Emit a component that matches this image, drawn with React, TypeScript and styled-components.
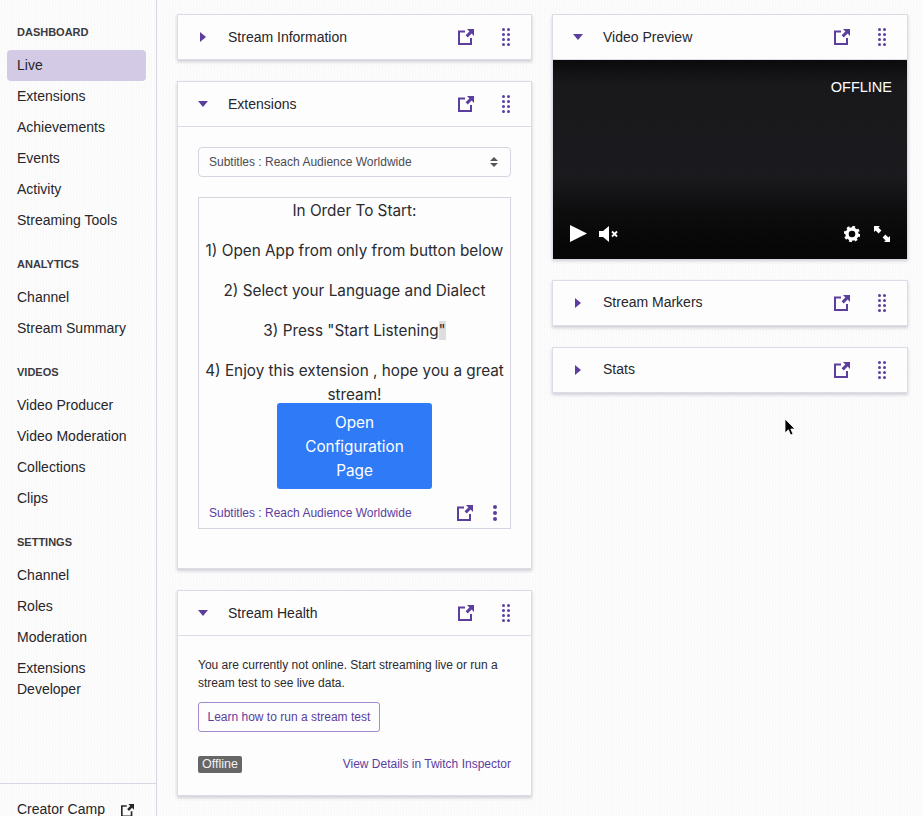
import React from "react";
import styled, { createGlobalStyle } from "styled-components";

const purple = "#5c3e9e";

const GlobalStyle = createGlobalStyle`
  html, body {
    margin: 0;
    padding: 0;
    height: 816px;
    overflow: hidden;
    background-color: #fbfbfb;
    background-image: conic-gradient(#f9f9f9 25%, #fdfdfd 0 50%, #f9f9f9 0 75%, #fdfdfd 0);
    background-size: 3px 3px;
    font-family: "Liberation Sans", Arial, sans-serif;
    color: #26262b;
  }
`;

const Page = styled.div`
  display: flex;
  width: 922px;
  height: 816px;
  overflow: hidden;
`;

const Sidebar = styled.nav`
  width: 156px;
  height: 816px;
  flex: none;
  border-right: 1px solid #d9d7e3;
  display: flex;
  flex-direction: column;
  overflow: hidden;
`;

const SideScroll = styled.div`
  flex: 1;
  padding: 21px 10px 0 7px;
`;

const SectionTitle = styled.div<{ $first?: boolean }>`
  font-size: 11px;
  font-weight: 700;
  line-height: 22px;
  height: 22px;
  padding-left: 10px;
  color: #3a3a40;
  margin-top: ${(p) => (p.$first ? 0 : "17px")};
  margin-bottom: 7px;
`;

const NavItem = styled.div<{ $active?: boolean }>`
  font-size: 14px;
  line-height: 21px;
  padding: 5px 10px;
  border-radius: 4px;
  background: ${(p) => (p.$active ? "#d3cbe6" : "transparent")};
`;

const SideFooter = styled.div`
  box-sizing: border-box;
  height: 33px;
  flex: none;
  border-top: 1px solid #d9d7e3;
  display: flex;
  align-items: flex-start;
  padding: 17px 0 0 17px;
  gap: 16px;
  font-size: 14px;
  line-height: 16px;
  svg {
    margin-top: 3px;
    flex: none;
  }
`;

const Main = styled.main`
  flex: 1;
  display: flex;
  align-items: flex-start;
  padding: 14px 0 0 20px;
  gap: 20px;
`;

const Column = styled.div`
  width: 355px;
  display: flex;
  flex-direction: column;
  gap: 21px;
`;

const RightColumn = styled(Column)`
  width: 356px;
`;

const Card = styled.section`
  background: #fdfdfd;
  border: 1px solid #dcdbe6;
  box-shadow: 0 2px 3px rgba(70, 65, 100, 0.24);
`;

const CardHeader = styled.header<{ $open?: boolean }>`
  height: 44px;
  display: flex;
  align-items: center;
  padding: 0 21px 0 20px;
  font-size: 14px;
  border-bottom: ${(p) => (p.$open ? "1px solid #dcdbe6" : "none")};
`;

const CaretSlot = styled.span`
  width: 10px;
  display: flex;
  justify-content: center;
  flex: none;
`;

const CardTitle = styled.span<{ $raised?: boolean }>`
  flex: 1;
  margin-left: 20px;
  margin-top: ${(p) => (p.$raised ? "-3px" : "-1px")};
`;

const HeaderIcons = styled.span`
  display: flex;
  align-items: center;
  gap: 28px;
`;

const ExtensionsBody = styled.div`
  padding: 20px 20px 39px;
`;

const SelectBox = styled.div`
  height: 28px;
  border: 1px solid #d5d4df;
  border-radius: 4px;
  display: flex;
  align-items: center;
  justify-content: space-between;
  padding: 0 12px 0 10px;
  font-size: 12px;
  color: #4b4b52;
`;

const ExtensionFrame = styled.div`
  margin-top: 20px;
  border: 1px solid #d5d4df;
`;

const ExtensionContent = styled.div`
  box-sizing: border-box;
  height: 291px;
  padding-top: 1px;
  font-family: Inter, Roboto, "Liberation Sans", sans-serif;
  font-size: 15.3px;
  line-height: 24px;
  text-align: center;
  color: #2b2b2f;
  overflow: hidden;
`;

const Instruction = styled.p`
  margin: 0 0 16px;
  &:last-of-type {
    margin-bottom: 0;
  }
`;

const Selection = styled.span`
  background: #dedede;
`;

const ConfigButton = styled.div`
  box-sizing: border-box;
  width: 155px;
  height: 86px;
  margin: -4px auto 0;
  padding: 8px 20px;
  border-radius: 3px;
  background: #2f7af6;
  color: #fff;
`;

const FrameFooter = styled.div`
  box-sizing: border-box;
  height: 39px;
  display: flex;
  align-items: center;
  padding: 9px 13px 0 10px;
  font-size: 12px;
  color: ${purple};
`;

const FooterLabel = styled.span`
  flex: 1;
`;

const FooterIcons = styled.span`
  display: flex;
  align-items: center;
  gap: 20px;
`;

const HealthBody = styled.div`
  padding: 20px 20px 22px;
  font-size: 12px;
  line-height: 18px;
  color: #2b2b30;
`;

const HealthText = styled.p`
  margin: 0;
`;

const OutlineButton = styled.div`
  display: inline-block;
  margin-top: 10px;
  height: 28px;
  line-height: 28px;
  padding: 0 8.5px;
  border: 1px solid #a08ad0;
  border-radius: 3px;
  color: ${purple};
`;

const HealthFooter = styled.div`
  margin-top: 23px;
  display: flex;
  align-items: center;
  justify-content: space-between;
`;

const OfflineBadge = styled.span`
  background: #666;
  color: #f2f2f2;
  border-radius: 2px;
  padding: 0 4px;
  font-size: 12.5px;
  line-height: 17px;
  height: 17px;
`;

const PurpleLink = styled.span`
  color: ${purple};
`;

const Video = styled.div`
  position: relative;
  height: 199px;
  margin-bottom: -1px;
  background-color: #000;
  background-image: conic-gradient(rgba(255, 255, 255, 0.012) 25%, transparent 0 50%, rgba(255, 255, 255, 0.012) 0 75%, transparent 0),
    linear-gradient(#09090a 0, #17171a 24px, #19181c 115px, #0c0c0d 150px, #050505 185px);
  background-size: 3px 3px, 100% 100%;
  display: flex;
  flex-direction: column;
  justify-content: space-between;
  color: #fff;
`;

const OfflineLabel = styled.div`
  align-self: flex-end;
  font-size: 14.5px;
  line-height: 16px;
  padding: 19px 15px 0 0;
`;

const Controls = styled.div`
  display: flex;
  align-items: center;
  justify-content: space-between;
  padding: 0 17px 17px 17px;
`;

const ControlGroup = styled.div<{ $gap: number }>`
  display: flex;
  align-items: center;
  gap: ${(p) => p.$gap}px;
`;

const Cursor = styled.svg`
  position: absolute;
  left: 784px;
  top: 418px;
`;

const ExternalIcon = ({ size = 16, color = purple }: { size?: number; color?: string }) => (
  <svg width={size} height={size} viewBox="0 0 16 16" fill="none">
    <path d="M7 2.5H1v12.5h12V9" stroke={color} strokeWidth="2" />
    <path d="M9 0h7v7l-2.4-2.4L9.8 8.5 7.6 6.3l3.8-3.9z" fill={color} />
  </svg>
);

const DragIcon = () => (
  <svg width="8" height="18" viewBox="0 0 8 18" fill={purple}>
    {[1.5, 6.5, 11.5, 16.5].flatMap((y) =>
      [1.5, 6.5].map((x) => <circle key={`${x}-${y}`} cx={x} cy={y} r="1.5" />)
    )}
  </svg>
);

const CaretRight = () => (
  <svg width="6" height="10" viewBox="0 0 6 10" fill={purple}>
    <path d="M0 0l6 5-6 5z" />
  </svg>
);

const CaretDown = () => (
  <svg width="10" height="6" viewBox="0 0 10 6" fill={purple}>
    <path d="M0 0h10L5 6z" />
  </svg>
);

const Panel = ({
  title,
  open,
  raised,
  children,
}: {
  title: string;
  open?: boolean;
  raised?: boolean;
  children?: React.ReactNode;
}) => (
  <Card>
    <CardHeader $open={open}>
      <CaretSlot>{open ? <CaretDown /> : <CaretRight />}</CaretSlot>
      <CardTitle $raised={raised}>{title}</CardTitle>
      <HeaderIcons>
        <ExternalIcon />
        <DragIcon />
      </HeaderIcons>
    </CardHeader>
    {children}
  </Card>
);

const navSections = [
  { title: "DASHBOARD", items: ["Live", "Extensions", "Achievements", "Events", "Activity", "Streaming Tools"] },
  { title: "ANALYTICS", items: ["Channel", "Stream Summary"] },
  { title: "VIDEOS", items: ["Video Producer", "Video Moderation", "Collections", "Clips"] },
  { title: "SETTINGS", items: ["Channel", "Roles", "Moderation", "Extensions Developer"] },
];

export default function App() {
  return (
    <Page>
      <GlobalStyle />
      <Sidebar>
        <SideScroll>
          {navSections.map((section, i) => (
            <div key={section.title}>
              <SectionTitle $first={i === 0}>{section.title}</SectionTitle>
              {section.items.map((item) => (
                <NavItem key={item} $active={item === "Live"}>
                  {item}
                </NavItem>
              ))}
            </div>
          ))}
        </SideScroll>
        <SideFooter>
          Creator Camp
          <ExternalIcon size={13} color="#26262b" />
        </SideFooter>
      </Sidebar>
      <Main>
        <Column>
          <Panel title="Stream Information" />
          <Panel title="Extensions" open>
            <ExtensionsBody>
              <SelectBox>
                Subtitles : Reach Audience Worldwide
                <svg width="8" height="10" viewBox="0 0 8 10" fill="#55555c">
                  <path d="M4 0l4 4H0zM4 10L0 6h8z" />
                </svg>
              </SelectBox>
              <ExtensionFrame>
                <ExtensionContent>
                  <Instruction>In Order To Start:</Instruction>
                  <Instruction>1) Open App from only from button below</Instruction>
                  <Instruction>2) Select your Language and Dialect</Instruction>
                  <Instruction>
                    3) Press "Start Listening<Selection>"</Selection>
                  </Instruction>
                  <Instruction>4) Enjoy this extension , hope you a great stream!</Instruction>
                  <ConfigButton>Open Configuration Page</ConfigButton>
                </ExtensionContent>
                <FrameFooter>
                  <FooterLabel>Subtitles : Reach Audience Worldwide</FooterLabel>
                  <FooterIcons>
                    <ExternalIcon />
                    <svg width="4" height="16" viewBox="0 0 4 16" fill={purple}>
                      <circle cx="2" cy="2" r="2" />
                      <circle cx="2" cy="8" r="2" />
                      <circle cx="2" cy="14" r="2" />
                    </svg>
                  </FooterIcons>
                </FrameFooter>
              </ExtensionFrame>
            </ExtensionsBody>
          </Panel>
          <Panel title="Stream Health" open>
            <HealthBody>
              <HealthText>You are currently not online. Start streaming live or run a stream test to see live data.</HealthText>
              <OutlineButton>Learn how to run a stream test</OutlineButton>
              <HealthFooter>
                <OfflineBadge>Offline</OfflineBadge>
                <PurpleLink>View Details in Twitch Inspector</PurpleLink>
              </HealthFooter>
            </HealthBody>
          </Panel>
        </Column>
        <RightColumn>
          <Panel title="Video Preview" open>
            <Video>
              <OfflineLabel>OFFLINE</OfflineLabel>
              <Controls>
                <ControlGroup $gap={12}>
                  <svg width="17" height="17" viewBox="0 0 17 17" fill="#fff">
                    <path d="M0 0l17 8.5L0 17z" />
                  </svg>
                  <svg width="19" height="16" viewBox="0 0 19 16" fill="#fff">
                    <path d="M0 5h4l6-5v16l-6-5H0z" />
                    <path d="M13 5.5l5 5M18 5.5l-5 5" stroke="#fff" strokeWidth="1.8" />
                  </svg>
                </ControlGroup>
                <ControlGroup $gap={14}>
                  <svg width="16" height="16" viewBox="0 0 16 16">
                    <circle cx="8" cy="8" r="5" fill="none" stroke="#fff" strokeWidth="3.4" />
                    <circle cx="8" cy="8" r="7" fill="none" stroke="#fff" strokeWidth="2.4" strokeDasharray="2.8 2.7" />
                  </svg>
                  <svg width="16" height="16" viewBox="0 0 16 16" fill="#fff">
                    <path d="M0 0h6L4.4 1.6l3 3-2.8 2.8-3-3L0 6zM16 16h-6l1.6-1.6-3-3 2.8-2.8 3 3L16 10z" />
                  </svg>
                </ControlGroup>
              </Controls>
            </Video>
          </Panel>
          <Panel title="Stream Markers" raised />
          <Panel title="Stats" raised />
        </RightColumn>
      </Main>
      <Cursor width="12" height="19" viewBox="0 0 12 19">
        <path d="M1 1v14l3.4-3.2L6.6 17l2.4-1-2.2-5H11z" fill="#000" stroke="#fff" strokeWidth="0.8" />
      </Cursor>
    </Page>
  );
}
